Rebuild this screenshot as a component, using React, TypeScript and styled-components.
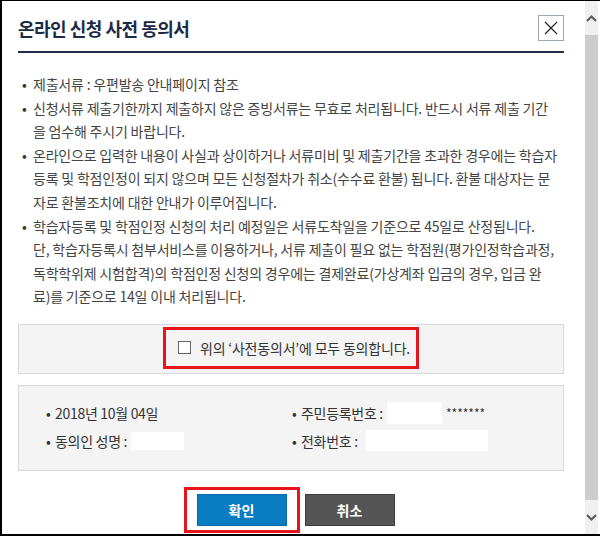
import styled, { createGlobalStyle } from 'styled-components';

const GlobalStyle = createGlobalStyle`
  html, body {
    margin: 0;
    padding: 0;
    background: #fff;
  }
  body {
    font-family: "Noto Sans CJK KR", "Noto Sans", sans-serif;
  }
  * {
    box-sizing: border-box;
  }
`;

const Frame = styled.div`
  width: 600px;
  height: 536px;
  display: flex;
  border-top: 1px solid #000;
  border-left: 2px solid #000;
  border-bottom: 2px solid #000;
  overflow: hidden;
`;

const Content = styled.div`
  flex: 1;
  padding: 0 21px 0 16px;
  display: flex;
  flex-direction: column;
`;

const Header = styled.div`
  display: flex;
  align-items: center;
  justify-content: space-between;
  padding: 14px 0 10px 0;
  border-bottom: 2px solid #1f2d4a;
`;

const Title = styled.h1`
  margin: 0;
  font-size: 18px;
  font-weight: 700;
  letter-spacing: -0.5px;
  color: #1c2a46;
  line-height: 26px;
`;

const CloseButton = styled.button`
  width: 26px;
  height: 26px;
  padding: 0;
  border: 1px solid #9ea6b2;
  background: #fff;
  display: flex;
  align-items: center;
  justify-content: center;
  cursor: pointer;
`;

const Notice = styled.ul`
  list-style: none;
  margin: 0;
  padding: 20px 0 0 4px;
`;

const NoticeItem = styled.li`
  padding-left: 11px;
  font-size: 14px;
  letter-spacing: -0.2px;
  line-height: 23.6px;
  color: #444;
  white-space: nowrap;

  &::before {
    content: '•';
    display: inline-block;
    width: 11px;
    margin-left: -11px;
    color: #333;
  }
`;

const AgreeBox = styled.div`
  margin-top: 15px;
  background: #f4f4f4;
  border: 1px solid #d9d9d9;
  padding: 2px 0 4px;
  display: flex;
  justify-content: center;
`;

const Highlight = styled.label`
  display: inline-flex;
  align-items: center;
  gap: 9px;
  height: 42px;
  padding: 0 6px 0 12px;
  border: 3px solid #e8141b;
  font-size: 14px;
  letter-spacing: -0.2px;
  color: #333;
  cursor: pointer;
`;

const CheckBox = styled.span`
  width: 13px;
  height: 13px;
  border: 1px solid #666;
  background: #fff;
  flex-shrink: 0;
`;

const InfoBox = styled.div`
  margin-top: 11px;
  background: #f4f4f4;
  border: 1px solid #d9d9d9;
  padding: 13px 0 15px 27px;
  display: grid;
  grid-template-columns: 246px 1fr;
`;

const InfoItem = styled.div`
  display: flex;
  align-items: center;
  height: 28px;
  font-size: 14px;
  letter-spacing: -0.3px;
  color: #333;
  white-space: nowrap;

  &::before {
    content: '•';
    width: 9px;
    flex-shrink: 0;
  }
`;

const Masked = styled.span<{ $w: number; $h: number; $gap?: number }>`
  display: inline-block;
  width: ${(p) => p.$w}px;
  height: ${(p) => p.$h}px;
  margin-left: ${(p) => p.$gap ?? 4}px;
  background: #fff;
`;

const Stars = styled.span`
  margin-left: 4px;
  font-size: 12px;
  letter-spacing: 0;
`;

const Actions = styled.div`
  margin-top: 16px;
  display: flex;
  justify-content: center;
  align-items: center;
  gap: 5px;
  padding-right: 4px;
`;

const Outline = styled.div`
  border: 3px solid #e8141b;
  padding: 4px 10px;
`;

const Button = styled.button<{ $tone: 'primary' | 'dark' }>`
  width: 90px;
  height: 32px;
  border: 1px solid ${(p) => (p.$tone === 'primary' ? '#0a69a6' : '#3c3c3c')};
  background: ${(p) => (p.$tone === 'primary' ? '#0a7cc2' : '#555')};
  color: #fff;
  font-family: inherit;
  font-size: 14px;
  font-weight: 700;
  cursor: pointer;
`;

const Scrollbar = styled.div`
  width: 13px;
  margin-right: 2px;
  background: #f0f0f0;
  display: flex;
  flex-direction: column;
  align-items: center;
`;

const Arrow = styled.div`
  height: 34px;
  display: flex;
  align-items: center;
  justify-content: center;
`;

const Thumb = styled.div`
  flex: 1;
  width: 13px;
  background: #cdcdcd;
`;

export default function App() {
  return (
    <>
      <GlobalStyle />
      <Frame>
        <Content>
          <Header>
            <Title>온라인 신청 사전 동의서</Title>
            <CloseButton aria-label="닫기">
              <svg width="14" height="14" viewBox="0 0 14 14">
                <path d="M1 1L13 13M13 1L1 13" stroke="#222" strokeWidth="1.2" fill="none" />
              </svg>
            </CloseButton>
          </Header>

          <Notice>
            <NoticeItem>제출서류 : 우편발송 안내페이지 참조</NoticeItem>
            <NoticeItem>
              신청서류 제출기한까지 제출하지 않은 증빙서류는 무효로 처리됩니다. 반드시 서류 제출 기간
              <br />을 엄수해 주시기 바랍니다.
            </NoticeItem>
            <NoticeItem>
              온라인으로 입력한 내용이 사실과 상이하거나 서류미비 및 제출기간을 초과한 경우에는 학습자
              <br />
              등록 및 학점인정이 되지 않으며 모든 신청절차가 취소(수수료 환불) 됩니다. 환불 대상자는 문
              <br />
              자로 환불조치에 대한 안내가 이루어집니다.
            </NoticeItem>
            <NoticeItem>
              학습자등록 및 학점인정 신청의 처리 예정일은 서류도착일을 기준으로 45일로 산정됩니다.
              <br />
              단, 학습자등록시 첨부서비스를 이용하거나, 서류 제출이 필요 없는 학점원(평가인정학습과정,
              <br />
              독학학위제 시험합격)의 학점인정 신청의 경우에는 결제완료(가상계좌 입금의 경우, 입금 완
              <br />
              료)를 기준으로 14일 이내 처리됩니다.
            </NoticeItem>
          </Notice>

          <AgreeBox>
            <Highlight>
              <CheckBox />
              위의 ‘사전동의서’에 모두 동의합니다.
            </Highlight>
          </AgreeBox>

          <InfoBox>
            <InfoItem>2018년 10월 04일</InfoItem>
            <InfoItem>
              주민등록번호 :<Masked $w={55} $h={22} />
              <Stars>*******</Stars>
            </InfoItem>
            <InfoItem>
              동의인 성명 :<Masked $w={53} $h={18} />
            </InfoItem>
            <InfoItem>
              전화번호 :<Masked $w={122} $h={21} $gap={8} />
            </InfoItem>
          </InfoBox>

          <Actions>
            <Outline>
              <Button $tone="primary">확인</Button>
            </Outline>
            <Button $tone="dark">취소</Button>
          </Actions>
        </Content>

        <Scrollbar>
          <Arrow>
            <svg width="11" height="7" viewBox="0 0 11 7">
              <path d="M1 6L5.5 1.5L10 6" stroke="#5a5a5a" strokeWidth="2" fill="none" />
            </svg>
          </Arrow>
          <Thumb />
          <Arrow>
            <svg width="11" height="7" viewBox="0 0 11 7">
              <path d="M1 1L5.5 5.5L10 1" stroke="#5a5a5a" strokeWidth="2" fill="none" />
            </svg>
          </Arrow>
        </Scrollbar>
      </Frame>
    </>
  );
}
